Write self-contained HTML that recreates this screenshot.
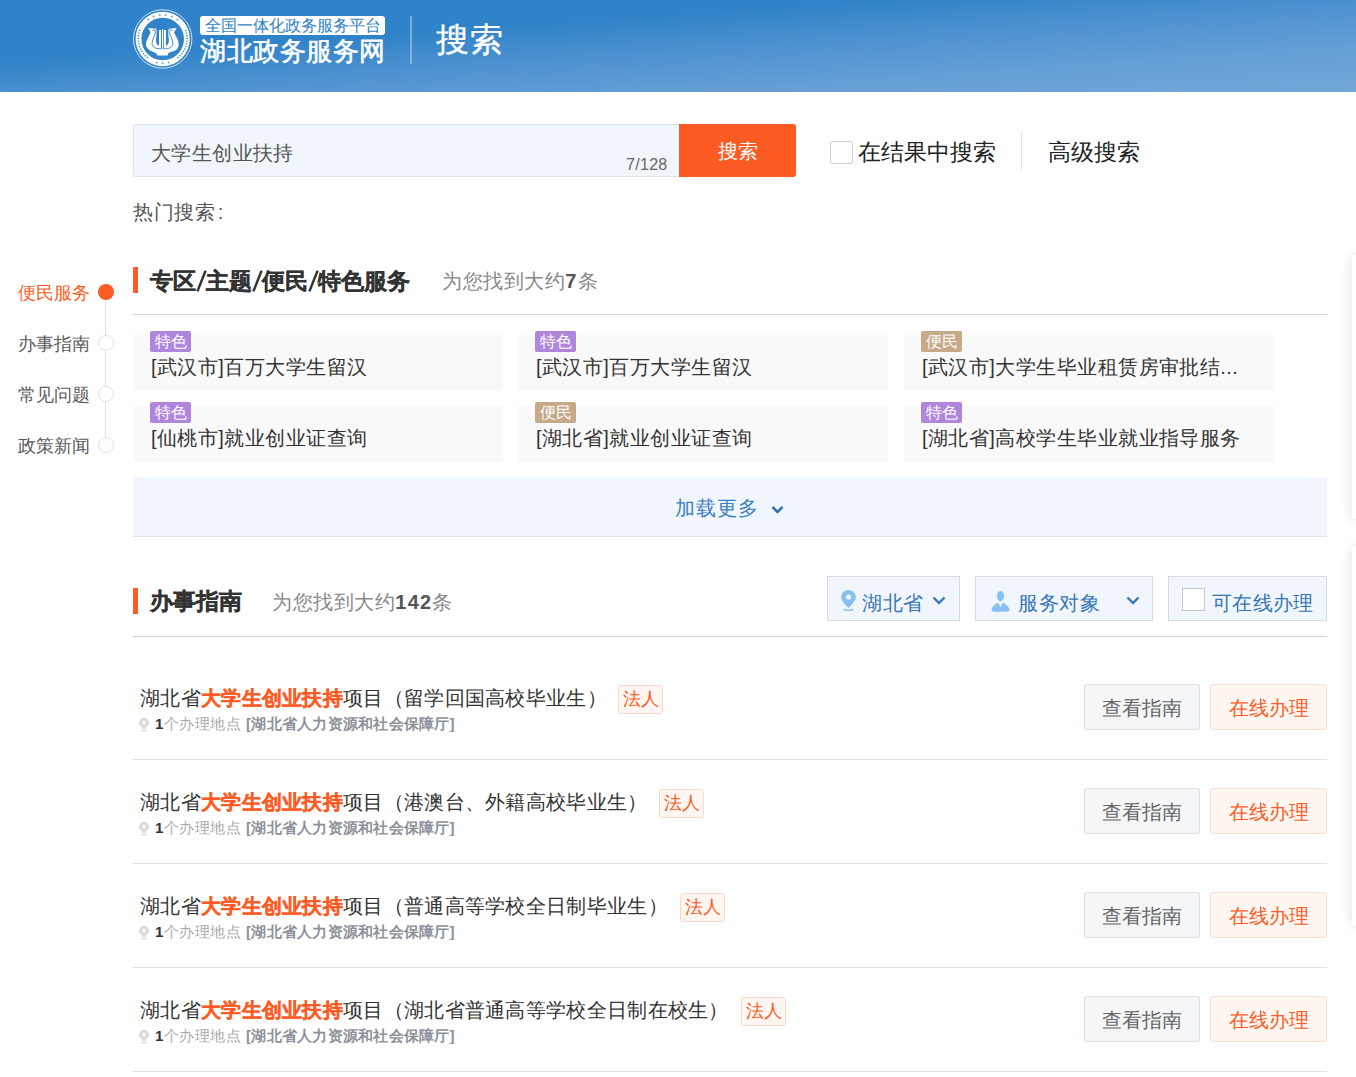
<!DOCTYPE html>
<html><head><meta charset="utf-8">
<style>
*{margin:0;padding:0;box-sizing:border-box}
html,body{width:1356px;height:1077px;overflow:hidden;background:#fff}
body{font-family:"Liberation Sans",sans-serif;position:relative;color:#333}
.a{position:absolute;white-space:nowrap}
#hdr{left:0;top:0;width:1356px;height:92px;background:linear-gradient(176deg,#3083c8 0%,#3083c8 33%,#4a90cf 51%,#659fd6 76%,#74a7d8 100%)}
.card{position:absolute;width:370px;height:56px;background:#f9f9f9}
.badge{position:absolute;left:17px;top:-4px;width:41px;height:21px;border-radius:2px;color:#fff;font-size:16px;line-height:21px;text-align:center}
.pur{background:#b085dc}
.brn{background:#c7a988}
.ctext{position:absolute;left:18px;top:20px;font-size:20px;line-height:24px;color:#333;white-space:nowrap;letter-spacing:0.45px}
.sec-bar{position:absolute;width:5px;height:26px;background:#fe5c24}
.sec-title{font-size:24px;font-weight:bold;color:#333;line-height:30px;-webkit-text-stroke:0.3px #333}
.sec-title s{text-decoration:none;padding:0 2px}
.sec-sub{font-size:20px;color:#888;line-height:26px;letter-spacing:0.55px}
.sec-sub b{color:#555;letter-spacing:1.2px}
.hr{position:absolute;left:133px;width:1194px;height:1px;background:#cfd3da}
.item-t{font-size:20px;color:#333;line-height:26px;letter-spacing:0.3px}
.item-t em{font-style:normal;font-weight:bold;color:#fe5c24;-webkit-text-stroke:0.35px #fe5c24}
.tag{position:absolute;height:29px;width:45px;border:1px solid #fcd9cc;background:#fff6f2;border-radius:3px;color:#fe5c24;font-size:18px;line-height:27px;text-align:center}
.loc{font-size:15px;color:#aaa;line-height:20px;letter-spacing:0.5px}
.loc b{color:#333;margin-left:1px}
.loc strong{color:#8c919a;letter-spacing:0.25px}
.btn1,.btn2{position:absolute;width:116px;height:46px;border-radius:3px;font-size:20px;line-height:46px;text-align:center}
.btn1{left:1084px;background:#f5f6f8;border:1px solid #dcdfe6;color:#666}
.btn2{left:1210px;width:117px;background:#fff5f1;border:1px solid #fcddd1;color:#fe5c24}
.filter{position:absolute;top:576px;height:45px;border:1px solid #d5dbe5;background:#f1f5fc;color:#3677b8;font-size:20px}
.nav{position:absolute;left:18px;font-size:18px;line-height:22px;color:#5a5a5a}
.dot{position:absolute;left:98px;width:16px;height:16px;border-radius:50%;border:1px solid #dfe2e8;background:#fff}
.panel{position:absolute;left:1352px;width:40px;background:#fff;box-shadow:0 0 12px rgba(0,0,0,0.12)}
</style></head><body>

<div id="hdr" class="a"></div>
<!-- logo emblem -->
<svg class="a" style="left:130px;top:8px" width="66" height="66" viewBox="0 0 66 66">
 <circle cx="32.7" cy="31" r="29.2" fill="none" stroke="#fff" stroke-width="0.9" opacity="0.85"/>
 <circle cx="32.7" cy="31" r="24.2" fill="none" stroke="#fff" stroke-width="5.9"/>
 <circle cx="32.7" cy="31" r="27.6" fill="none" stroke="#3083c8" stroke-width="0.6" opacity="0.6"/>
 <g fill="none" stroke="#3083c8" stroke-width="1.6" stroke-dasharray="1.1 1.6">
  <path d="M9.8 22 A24.3 24.3 0 0 0 18 50"/>
  <path d="M55.6 22 A24.3 24.3 0 0 1 47.4 50"/>
 </g>
 <g fill="#3083c8" opacity="0.75"><circle cx="18.08" cy="11.59" r="1.0"/><circle cx="23.60" cy="8.47" r="1.0"/><circle cx="29.74" cy="6.88" r="1.0"/><circle cx="35.66" cy="6.88" r="1.0"/><circle cx="41.80" cy="8.47" r="1.0"/><circle cx="47.32" cy="11.59" r="1.0"/><circle cx="38.58" cy="54.58" r="0.95"/><circle cx="32.70" cy="55.30" r="0.95"/><circle cx="26.82" cy="54.58" r="0.95"/></g>
 <path fill="#fff" d="M18.1 20.1 L26.6 20.7 L38.3 20.7 L46.8 20.1 L44 24.2 C46.5 29 48.7 32.5 48.7 36.5 C48.7 39 47.5 41 45.6 42.2 C43 43.6 40 44 38.3 45 L37.7 47.6 L27.3 47.6 L26.6 45.7 C25 44.2 22 43.6 19.8 42.2 C17.5 41 16 39 15.9 36.5 C15.9 32.5 18.5 29 20.6 24.2 Z"/>
 <path fill="#3083c8" d="M26.4 20.4 L29.2 21.4 L29.2 37.6 C28.2 37.8 26.8 36.5 26.1 34 C25.7 30 27.3 26 26.4 20.4 Z"/>
 <path fill="#3083c8" d="M38.5 20.4 L35.7 21.4 L35.7 37.6 C36.7 37.8 38.1 36.5 38.8 34 C39.2 30 37.6 26 38.5 20.4 Z"/>
 <rect x="31" y="21.5" width="1" height="19.3" fill="#3083c8"/>
 <rect x="32.9" y="21.5" width="1" height="19.3" fill="#3083c8"/>
 <rect x="26.5" y="16" width="12" height="6" fill="#3083c8"/>
 <rect x="29.2" y="22" width="1.8" height="18" fill="#fff"/><rect x="32" y="21" width="0.9" height="19" fill="#fff"/><rect x="33.9" y="22" width="1.8" height="18" fill="#fff"/>
 <g fill="none" stroke="#3083c8" stroke-width="0.9">
  <path d="M22.4 22.9 C23 21.4 25.4 21.3 25.5 23.4 C25.6 25.5 24 28.5 22.6 32 C21.6 35 21.9 38.3 24.4 39.6 C26.5 40.6 29 40.8 31.6 40.8"/>
  <path d="M42.5 22.9 C41.9 21.4 39.5 21.3 39.4 23.4 C39.3 25.5 40.9 28.5 42.3 32 C43.3 35 43 38.3 40.5 39.6 C38.4 40.6 35.9 40.8 33.3 40.8"/>
 </g>
</svg>
<div class="a" style="left:200px;top:16px;width:185px;height:19px;background:#fff;border-radius:3px"></div>
<div class="a" style="left:200px;top:15px;width:185px;font-size:16px;line-height:22px;color:#2f7fc6;text-align:center">全国一体化政务服务平台</div>
<div class="a" style="left:200px;top:34px;font-size:26px;line-height:34px;color:#fff;font-weight:500;letter-spacing:0.5px;-webkit-text-stroke:0.6px #fff">湖北政务服务网</div>
<div class="a" style="left:410px;top:16px;width:2px;height:48px;background:rgba(255,255,255,0.35)"></div>
<div class="a" style="left:436px;top:18px;font-size:33px;line-height:44px;color:#fff;letter-spacing:0.5px;-webkit-text-stroke:0.4px #fff">搜索</div>

<!-- search -->
<div class="a" style="left:133px;top:124px;width:550px;height:53px;background:#f1f5fc;border:1px solid #dde2ea;border-right:none;border-radius:3px 0 0 3px"></div>
<div class="a" style="left:151px;top:139px;font-size:20px;line-height:28px;color:#555;letter-spacing:0.4px">大学生创业扶持</div>
<div class="a" style="left:626px;top:155px;font-size:16px;line-height:20px;color:#666;letter-spacing:0.3px">7/128</div>
<div class="a" style="left:679px;top:124px;width:117px;height:53px;background:#fe5a23;border-radius:0 3px 3px 0;color:#fff;font-size:20px;line-height:55px;text-align:center">搜索</div>
<div class="a" style="left:830px;top:141px;width:23px;height:23px;border:1px solid #cfcfcf;border-radius:2px;background:#fff"></div>
<div class="a" style="left:858px;top:136px;font-size:23px;line-height:32px;color:#222">在结果中搜索</div>
<div class="a" style="left:1021px;top:131px;width:1px;height:39px;background:#e3e3e3"></div>
<div class="a" style="left:1048px;top:136px;font-size:23px;line-height:32px;color:#222">高级搜索</div>
<div class="a" style="left:133px;top:199px;font-size:20px;line-height:26px;color:#555;letter-spacing:0.7px">热门搜索<span style="margin-left:2px">:</span></div>

<!-- left nav -->
<div class="a" style="left:105px;top:292px;width:1px;height:153px;background:#dfe2e8"></div>
<div class="nav" style="top:282px;color:#fe5c24">便民服务</div>
<div class="a" style="left:98px;top:284px;width:16px;height:16px;border-radius:50%;background:#fe5c24"></div>
<div class="nav" style="top:333px">办事指南</div>
<div class="dot" style="top:335px"></div>
<div class="nav" style="top:384px">常见问题</div>
<div class="dot" style="top:386px"></div>
<div class="nav" style="top:435px">政策新闻</div>
<div class="dot" style="top:437px"></div>

<!-- section 1 -->
<div class="sec-bar" style="left:133px;top:267px"></div>
<div class="a sec-title" style="left:150px;top:266px;font-size:23px">专区<svg width="11" height="22" style="vertical-align:-3px;margin:0 -0.5px" viewBox="0 0 11 22"><line x1="9.6" y1="0.6" x2="1.4" y2="21.4" stroke="#333" stroke-width="2.5"/></svg>主题<svg width="11" height="22" style="vertical-align:-3px;margin:0 -0.5px" viewBox="0 0 11 22"><line x1="9.6" y1="0.6" x2="1.4" y2="21.4" stroke="#333" stroke-width="2.5"/></svg>便民<svg width="11" height="22" style="vertical-align:-3px;margin:0 -0.5px" viewBox="0 0 11 22"><line x1="9.6" y1="0.6" x2="1.4" y2="21.4" stroke="#333" stroke-width="2.5"/></svg>特色服务</div>
<div class="a sec-sub" style="left:442px;top:268px">为您找到大约<b>7</b>条</div>
<div class="hr" style="top:314px"></div>

<div class="card" style="left:133px;top:335px"><div class="badge pur">特色</div><div class="ctext">[武汉市]百万大学生留汉</div></div>
<div class="card" style="left:518px;top:335px"><div class="badge pur">特色</div><div class="ctext">[武汉市]百万大学生留汉</div></div>
<div class="card" style="left:904px;top:335px"><div class="badge brn">便民</div><div class="ctext">[武汉市]大学生毕业租赁房审批结...</div></div>
<div class="card" style="left:133px;top:406px"><div class="badge pur">特色</div><div class="ctext">[仙桃市]就业创业证查询</div></div>
<div class="card" style="left:518px;top:406px"><div class="badge brn">便民</div><div class="ctext">[湖北省]就业创业证查询</div></div>
<div class="card" style="left:904px;top:406px"><div class="badge pur">特色</div><div class="ctext">[湖北省]高校学生毕业就业指导服务</div></div>

<div class="a" style="left:133px;top:477px;width:1194px;height:60px;background:#f1f5fc;border-bottom:1px solid #dde2ea"></div>
<div class="a" style="left:675px;top:494px;font-size:20px;line-height:28px;color:#3a80c4;letter-spacing:1px">加载更多</div>
<svg class="a" style="left:771px;top:505px" width="13" height="10" viewBox="0 0 13 10"><path d="M1.5 2 L6.5 7 L11.5 2" fill="none" stroke="#2f70b5" stroke-width="2.6"/></svg>

<!-- section 2 -->
<div class="sec-bar" style="left:133px;top:588px"></div>
<div class="a sec-title" style="left:150px;top:586px;font-size:23px">办事指南</div>
<div class="a sec-sub" style="left:272px;top:589px">为您找到大约<b>142</b>条</div>
<div class="hr" style="top:636px"></div>

<div class="filter" style="left:827px;width:133px"></div>
<svg class="a" style="left:840px;top:589px" width="17" height="23" viewBox="0 0 17 23"><path d="M8.5 1 C4.4 1 1.2 4.2 1.2 8.2 C1.2 12.5 8.5 19 8.5 19 C8.5 19 15.8 12.5 15.8 8.2 C15.8 4.2 12.6 1 8.5 1 Z" fill="#85c1f3"/><circle cx="8.5" cy="8" r="2.6" fill="#f1f5fc"/><path d="M3.6 20.3 C4.5 19.5 6 19.7 6.6 20.3 C7.5 21 9.5 21 10.4 20.3 C11 19.7 12.5 19.5 13.4 20.3 C13.8 21.3 12 22.1 8.5 22.1 C5 22.1 3.2 21.3 3.6 20.3 Z" fill="#85c1f3"/></svg>
<div class="a" style="left:862px;top:589px;font-size:20px;line-height:28px;color:#3677b8;letter-spacing:0.6px">湖北省</div>
<svg class="a" style="left:932px;top:595px" width="14" height="11" viewBox="0 0 14 11"><path d="M1.5 2.5 L7 8 L12.5 2.5" fill="none" stroke="#3a78bd" stroke-width="2.4"/></svg>

<div class="filter" style="left:975px;width:178px"></div>
<svg class="a" style="left:991px;top:591px" width="20" height="21" viewBox="0 0 20 21"><ellipse cx="9.5" cy="5.1" rx="3.6" ry="5.1" fill="#85c1f3"/><path d="M7.3 11.8 L9.5 16.2 L11.7 11.8 C14 12.5 17.5 15 18.6 18.5 C18.8 20 17 20.7 15 20.7 L4 20.7 C2 20.7 0.3 20 0.5 18.5 C1.5 15 5 12.5 7.3 11.8 Z" fill="#85c1f3"/></svg>
<div class="a" style="left:1018px;top:589px;font-size:20px;line-height:28px;color:#3677b8;letter-spacing:0.5px">服务对象</div>
<svg class="a" style="left:1126px;top:595px" width="14" height="11" viewBox="0 0 14 11"><path d="M1.5 2.5 L7 8 L12.5 2.5" fill="none" stroke="#3a78bd" stroke-width="2.4"/></svg>

<div class="filter" style="left:1168px;width:159px"></div>
<div class="a" style="left:1182px;top:588px;width:23px;height:23px;background:#fff;border:1px solid #c8c8c8"></div>
<div class="a" style="left:1212px;top:589px;font-size:20px;line-height:28px;color:#3677b8;letter-spacing:0.3px">可在线办理</div>

<div class="a item-t" style="left:140px;top:685px">湖北省<em>大学生创业扶持</em>项目（留学回国高校毕业生）</div>
<div class="tag" style="left:618px;top:685px">法人</div>
<svg class="a" style="left:138px;top:717px" width="12" height="15" viewBox="0 0 12 15"><path d="M6 0.8 C3.2 0.8 1 3 1 5.7 C1 8.8 6 12.5 6 12.5 C6 12.5 11 8.8 11 5.7 C11 3 8.8 0.8 6 0.8 Z" fill="#dcdcdc"/><circle cx="6" cy="5.6" r="1.8" fill="#fff"/><ellipse cx="6" cy="13.8" rx="3" ry="0.9" fill="#dcdcdc"/></svg>
<div class="a loc" style="left:154px;top:714px"><b>1</b>个办理地点 <strong>[湖北省人力资源和社会保障厅]</strong></div>
<div class="btn1" style="top:684px">查看指南</div>
<div class="btn2" style="top:684px">在线办理</div>
<div class="hr" style="top:759px;background:#dde0e6"></div>

<div class="a item-t" style="left:140px;top:789px">湖北省<em>大学生创业扶持</em>项目（港澳台、外籍高校毕业生）</div>
<div class="tag" style="left:659px;top:789px">法人</div>
<svg class="a" style="left:138px;top:821px" width="12" height="15" viewBox="0 0 12 15"><path d="M6 0.8 C3.2 0.8 1 3 1 5.7 C1 8.8 6 12.5 6 12.5 C6 12.5 11 8.8 11 5.7 C11 3 8.8 0.8 6 0.8 Z" fill="#dcdcdc"/><circle cx="6" cy="5.6" r="1.8" fill="#fff"/><ellipse cx="6" cy="13.8" rx="3" ry="0.9" fill="#dcdcdc"/></svg>
<div class="a loc" style="left:154px;top:818px"><b>1</b>个办理地点 <strong>[湖北省人力资源和社会保障厅]</strong></div>
<div class="btn1" style="top:788px">查看指南</div>
<div class="btn2" style="top:788px">在线办理</div>
<div class="hr" style="top:863px;background:#dde0e6"></div>

<div class="a item-t" style="left:140px;top:893px">湖北省<em>大学生创业扶持</em>项目（普通高等学校全日制毕业生）</div>
<div class="tag" style="left:680px;top:893px">法人</div>
<svg class="a" style="left:138px;top:925px" width="12" height="15" viewBox="0 0 12 15"><path d="M6 0.8 C3.2 0.8 1 3 1 5.7 C1 8.8 6 12.5 6 12.5 C6 12.5 11 8.8 11 5.7 C11 3 8.8 0.8 6 0.8 Z" fill="#dcdcdc"/><circle cx="6" cy="5.6" r="1.8" fill="#fff"/><ellipse cx="6" cy="13.8" rx="3" ry="0.9" fill="#dcdcdc"/></svg>
<div class="a loc" style="left:154px;top:922px"><b>1</b>个办理地点 <strong>[湖北省人力资源和社会保障厅]</strong></div>
<div class="btn1" style="top:892px">查看指南</div>
<div class="btn2" style="top:892px">在线办理</div>
<div class="hr" style="top:967px;background:#dde0e6"></div>

<div class="a item-t" style="left:140px;top:997px">湖北省<em>大学生创业扶持</em>项目（湖北省普通高等学校全日制在校生）</div>
<div class="tag" style="left:741px;top:997px">法人</div>
<svg class="a" style="left:138px;top:1029px" width="12" height="15" viewBox="0 0 12 15"><path d="M6 0.8 C3.2 0.8 1 3 1 5.7 C1 8.8 6 12.5 6 12.5 C6 12.5 11 8.8 11 5.7 C11 3 8.8 0.8 6 0.8 Z" fill="#dcdcdc"/><circle cx="6" cy="5.6" r="1.8" fill="#fff"/><ellipse cx="6" cy="13.8" rx="3" ry="0.9" fill="#dcdcdc"/></svg>
<div class="a loc" style="left:154px;top:1026px"><b>1</b>个办理地点 <strong>[湖北省人力资源和社会保障厅]</strong></div>
<div class="btn1" style="top:996px">查看指南</div>
<div class="btn2" style="top:996px">在线办理</div>
<div class="hr" style="top:1071px;background:#dde0e6"></div>

<div class="panel" style="top:255px;height:264px"></div>
<div class="panel" style="top:547px;height:378px"></div>

</body></html>
